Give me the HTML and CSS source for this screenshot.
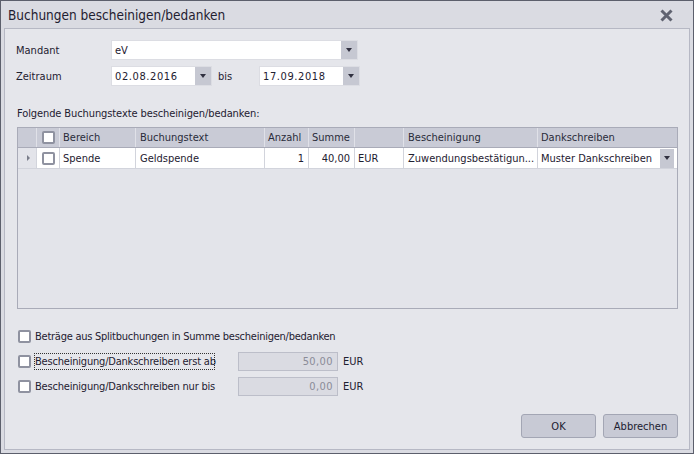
FILE: index.html
```html
<!DOCTYPE html>
<html>
<head>
<meta charset="utf-8">
<link rel="stylesheet" href="styles.css">
</head>
<body>
<div class="window">
  <div class="titlebar">
    <span class="title">Buchungen bescheinigen/bedanken</span>
    <svg class="close" width="13" height="13" viewBox="0 0 13 13"><path d="M1.5 1.5 L11.5 11.5 M11.5 1.5 L1.5 11.5" stroke="#5f6270" stroke-width="3" stroke-linecap="butt"/></svg>
  </div>
  <div class="panel">
    <div class="form-row row-mandant">
      <label class="lbl">Mandant</label>
      <div class="combo combo-wide"><span class="val">eV</span><span class="btn"><i class="tri"></i></span></div>
    </div>
    <div class="form-row row-zeit">
      <label class="lbl">Zeitraum</label>
      <div class="combo combo-date"><span class="val mono">02.08.2016</span><span class="btn"><i class="tri"></i></span></div>
      <span class="bis">bis</span>
      <div class="combo combo-date"><span class="val mono">17.09.2018</span><span class="btn"><i class="tri"></i></span></div>
    </div>
    <div class="section-lbl">Folgende Buchungstexte bescheinigen/bedanken:</div>
    <div class="grid">
      <div class="grow ghead">
        <div class="c c1"></div>
        <div class="c c2"><span class="cb"></span></div>
        <div class="c c3">Bereich</div>
        <div class="c c4">Buchungstext</div>
        <div class="c c5">Anzahl</div>
        <div class="c c6">Summe</div>
        <div class="c c7"></div>
        <div class="c c8">Bescheinigung</div>
        <div class="c c9">Dankschreiben</div>
      </div>
      <div class="grow gdata">
        <div class="c c1"><i class="ind"></i></div>
        <div class="c c2"><span class="cb"></span></div>
        <div class="c c3">Spende</div>
        <div class="c c4">Geldspende</div>
        <div class="c c5 r">1</div>
        <div class="c c6 r">40,00</div>
        <div class="c c7">EUR</div>
        <div class="c c8">Zuwendungsbestätigun...</div>
        <div class="c c9 cdrop"><span>Muster Dankschreiben</span><span class="btn gbtn"><i class="tri"></i></span></div>
      </div>
    </div>
    <div class="opts">
      <div class="opt opt1"><span class="cb"></span><span class="otext">Beträge aus Splitbuchungen in Summe bescheinigen/bedanken</span></div>
      <div class="opt opt2"><span class="cb"></span><span class="otext focus">Bescheinigung/Dankschreiben erst ab</span><span class="num">50,00</span><span class="eur">EUR</span></div>
      <div class="opt opt3"><span class="cb"></span><span class="otext">Bescheinigung/Dankschreiben nur bis</span><span class="num">0,00</span><span class="eur">EUR</span></div>
    </div>
    <div class="buttons">
      <button class="b ok">OK</button>
      <button class="b">Abbrechen</button>
    </div>
  </div>
</div>
</body>
</html>
```
FILE: styles.css
```css
* { box-sizing: border-box; }
html, body { margin: 0; padding: 0; }
body {
  width: 694px; height: 454px;
  font-family: "DejaVu Sans Condensed", "DejaVu Sans", sans-serif;
  font-stretch: condensed;
  font-size: 11px;
  color: #1e2030;
  background: #d9dae2;
}
.window {
  width: 694px; height: 454px;
  border: 1px solid #5c5f6c;
  background: #dadbe2;
  display: flex; flex-direction: column;
  padding: 0 3px 3px 3px;
}
.titlebar {
  height: 27px;
  display: flex; align-items: center; justify-content: space-between;
  padding: 0 0 0 4px;
}
.title { font-size: 13.5px; color: #1f2030; padding-top: 1px; white-space: nowrap; }
.close { margin-right: 17px; margin-top: 2px; }
.panel {
  flex: 1;
  border: 1px solid #b6b8c4;
  background: #e5e6eb;
  display: flex; flex-direction: column;
  padding: 11px 11px 0 12px;
}
.form-row { display: flex; align-items: center; height: 20px; }
.row-zeit { margin-top: 6px; }
.lbl { width: 95px; margin-left: -1px; }
.combo {
  height: 20px; background: #fff; border: 1px solid #dcdde3;
  display: flex; align-items: center; justify-content: space-between;
}
.combo .val { padding-left: 3px; }
.mono { letter-spacing: 0.6px; }
.combo-wide { width: 247px; }
.combo-date { width: 101px; }
.btn {
  width: 16px; height: 18px; background: #c6c8d2;
  display: flex; align-items: center; justify-content: center;
}
.tri {
  width: 0; height: 0;
  border-left: 3px solid transparent; border-right: 3px solid transparent;
  border-top: 4px solid #303040;
}
.bis { width: 47px; padding-left: 6px; }
.section-lbl { margin-top: 19px; height: 17px; line-height: 17px; white-space: nowrap; letter-spacing: -0.1px; }
.grid {
  margin-top: 5px;
  width: 661px; height: 182px;
  border: 1px solid #a9abb8;
  background: #e3e4ea;
}
.grow { display: flex; }
.c {
  height: 100%; border-right: 1px solid #e0e1e8;
  display: flex; align-items: center; padding-left: 3px;
  white-space: nowrap; overflow: hidden;
}
.ghead { height: 20px; background: #c9cbd6; border-bottom: 1px solid #a9abb8; color: #2a2b3a; }
.gdata { height: 21px; background: #fff; border-bottom: 1px solid #d2d4dc; }
.gdata .c { border-right-color: #d2d4dc; }
.gdata .c1 { background: #e3e4ea; }
.c1 { width: 19px; justify-content: center; padding-left: 0; }
.c2 { width: 23px; justify-content: center; padding-left: 0; }
.c3 { width: 76px; }
.c4 { width: 129px; padding-left: 4px; }
.c5 { width: 44px; }
.c6 { width: 46px; }
.c7 { width: 49px; }
.c8 { width: 134px; padding-left: 4px; }
.c9 { width: 139px; border-right: none; }
.r { justify-content: flex-end; padding-right: 4px; padding-left: 0; }
.ind {
  width: 0; height: 0;
  border-top: 3px solid transparent; border-bottom: 3px solid transparent;
  border-left: 3px solid #7a7d8a; margin-left: 2px;
}
.cdrop { justify-content: space-between; padding-right: 3px; }
.gbtn { width: 14px; height: 19px; }
.cb {
  display: inline-block; width: 13px; height: 13px;
  border: 2px solid #8f92a0; border-radius: 2px; background: #fff;
  flex: none;
}
.opts { margin-top: 18px; display: flex; flex-direction: column; }
.opt { display: flex; align-items: center; height: 19px; }
.opt2 { margin-top: 6px; }
.opt3 { margin-top: 6px; }
.opt .cb { margin-left: 1px; margin-right: 3px; }
.otext { width: 204px; height: 17px; line-height: 15px; border: 1px dotted transparent; white-space: nowrap; letter-spacing: -0.2px; }
.opt1 .otext { width: auto; letter-spacing: -0.25px; }
.focus { width: 181px; border-color: #333; margin-right: 23px; }
.num {
  width: 100px; height: 19px; background: #dadbe2; border: 1px solid #bcbec9;
  color: #8a8c98; text-align: right; padding-right: 4px; line-height: 17px;
  letter-spacing: 0.4px;
}
.eur { margin-left: 5px; }
.buttons { display: flex; justify-content: flex-end; gap: 7px; margin-top: 18px; }
.b {
  width: 75px; height: 24px;
  font-family: inherit; font-stretch: condensed; font-size: 11px; color: #202030;
  background: #c8cad5; border: 1px solid #a3a6b4; border-radius: 3px;
}
```
